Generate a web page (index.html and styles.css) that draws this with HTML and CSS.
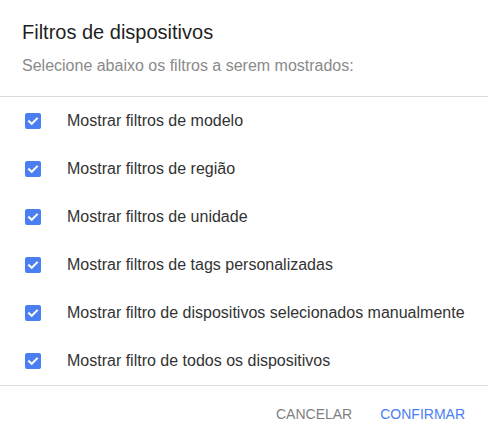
FILE: index.html
```html
<!DOCTYPE html>
<html lang="pt-BR">
<head>
<meta charset="utf-8">
<title>Filtros de dispositivos</title>
<link rel="stylesheet" href="styles.css">
</head>
<body>
<div class="dialog">
  <header class="dialog-header">
    <h2 class="dialog-title">Filtros de dispositivos</h2>
    <p class="dialog-subtitle">Selecione abaixo os filtros a serem mostrados:</p>
  </header>
  <ul class="filter-list">
    <li class="filter-row"><span class="check"><svg viewBox="0 0 16 16"><path d="M4 8.2l2.7 2.6L12 5.6"/></svg></span><span class="label">Mostrar filtros de modelo</span></li>
    <li class="filter-row"><span class="check"><svg viewBox="0 0 16 16"><path d="M4 8.2l2.7 2.6L12 5.6"/></svg></span><span class="label">Mostrar filtros de região</span></li>
    <li class="filter-row"><span class="check"><svg viewBox="0 0 16 16"><path d="M4 8.2l2.7 2.6L12 5.6"/></svg></span><span class="label">Mostrar filtros de unidade</span></li>
    <li class="filter-row"><span class="check"><svg viewBox="0 0 16 16"><path d="M4 8.2l2.7 2.6L12 5.6"/></svg></span><span class="label">Mostrar filtros de tags personalizadas</span></li>
    <li class="filter-row"><span class="check"><svg viewBox="0 0 16 16"><path d="M4 8.2l2.7 2.6L12 5.6"/></svg></span><span class="label">Mostrar filtro de dispositivos selecionados manualmente</span></li>
    <li class="filter-row"><span class="check"><svg viewBox="0 0 16 16"><path d="M4 8.2l2.7 2.6L12 5.6"/></svg></span><span class="label">Mostrar filtro de todos os dispositivos</span></li>
  </ul>
  <footer class="dialog-actions">
    <button class="btn btn-cancel" type="button">Cancelar</button>
    <button class="btn btn-confirm" type="button">Confirmar</button>
  </footer>
</div>
</body>
</html>
```

FILE: styles.css
```css
* { box-sizing: border-box; }

html, body {
  margin: 0;
  padding: 0;
  background: #ffffff;
}

body {
  font-family: "Liberation Sans", Arial, sans-serif;
  color: #333333;
}

.dialog {
  width: 488px;
  height: 442px;
  background: #ffffff;
  display: flex;
  flex-direction: column;
}

.dialog-header {
  padding: 16px 22px 0 22px;
  height: 97px;
  border-bottom: 1px solid #dcdcdc;
}

.dialog-title {
  margin: 0;
  font-size: 20px;
  font-weight: 400;
  line-height: 32px;
  color: #1f1f1f;
}

.dialog-subtitle {
  margin: 6px 0 0 0;
  font-size: 16px;
  line-height: 24px;
  color: #8a8a8a;
}

.filter-list {
  list-style: none;
  margin: 0;
  padding: 0;
  border-bottom: 1px solid #dcdcdc;
}

.filter-row {
  height: 48px;
  display: flex;
  align-items: center;
  padding-left: 25px;
}

.check {
  width: 16px;
  height: 16px;
  border-radius: 2px;
  background: #4a7ef3;
  display: flex;
  flex: none;
}

.check svg {
  width: 16px;
  height: 16px;
  fill: none;
  stroke: #ffffff;
  stroke-width: 2;
  stroke-linecap: square;
}

.label {
  margin-left: 26px;
  font-size: 16px;
  color: #333333;
}

.dialog-actions {
  flex: 1;
  display: flex;
  align-items: center;
  justify-content: flex-end;
  gap: 12px;
  padding-right: 15px;
}

.btn {
  border: 0;
  background: transparent;
  font-family: "Liberation Sans", Arial, sans-serif;
  font-size: 14px;
  text-transform: uppercase;
  padding: 8px 8px;
  cursor: pointer;
}

.btn-cancel {
  color: #7f7f7f;
}

.btn-confirm {
  color: #4a7ef3;
}
```
